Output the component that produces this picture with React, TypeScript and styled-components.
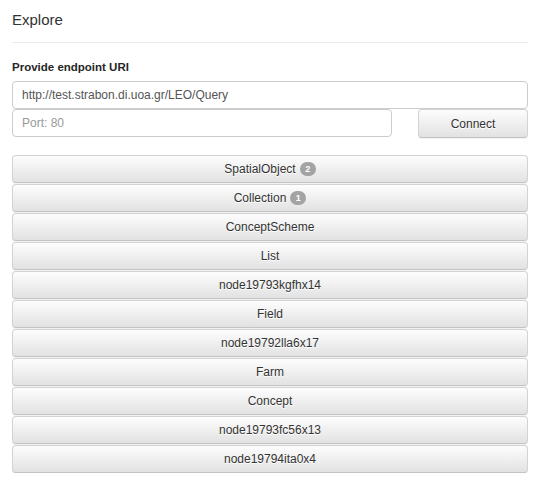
import React from "react";
import styled, { createGlobalStyle } from "styled-components";

const Global = createGlobalStyle`
  html, body { margin: 0; padding: 0; background: #fff; }
  body { font-family: "Liberation Sans", Arial, Helvetica, sans-serif; color: #333; }
  * { box-sizing: border-box; }
`;

const Page = styled.div`
  padding: 11px 11px 0 12px;
  width: 539px;
`;

const Title = styled.h3`
  margin: 0;
  font-size: 15px;
  font-weight: normal;
  line-height: 18px;
  color: #333;
`;

const Rule = styled.hr`
  border: 0;
  border-top: 1px solid #e9e9e9;
  margin: 13px 0 17px 0;
`;

const Label = styled.label`
  display: block;
  font-size: 11.5px;
  font-weight: bold;
  line-height: 14px;
  margin-bottom: 7px;
  color: #262626;
`;

const Input = styled.input`
  display: block;
  height: 28px;
  width: 100%;
  padding: 0 9px;
  font-family: inherit;
  font-size: 12px;
  color: #555;
  background: #fff;
  border: 1px solid #ccc;
  border-radius: 4px;
  outline: none;
  &::placeholder { color: #999; }
`;

const PortRow = styled.div`
  display: flex;
  align-items: flex-start;
  gap: 26px;
`;

const PortInput = styled(Input)`
  width: 380px;
  flex: none;
`;

const Btn = styled.button`
  display: flex;
  align-items: center;
  justify-content: center;
  gap: 4px;
  height: 28px;
  padding: 0 10px;
  font-family: inherit;
  font-size: 12px;
  color: #333;
  text-shadow: 0 1px 0 #fff;
  background-image: linear-gradient(to bottom, #fdfdfd 0, #e2e2e2 100%);
  border: 1px solid #d3d3d3;
  border-bottom-color: #c4c4c4;
  border-radius: 4px;
  box-shadow: inset 0 1px 0 rgba(255, 255, 255, 0.15), 0 1px 1px rgba(0, 0, 0, 0.06);
  cursor: pointer;
`;

const ConnectBtn = styled(Btn)`
  flex: 1;
  height: 29px;
`;

const List = styled.div`
  display: flex;
  flex-direction: column;
  gap: 1px;
  margin-top: 17px;
`;

const BlockBtn = styled(Btn)`
  width: 100%;
`;

const Badge = styled.span`
  display: inline-flex;
  align-items: center;
  justify-content: center;
  min-width: 16px;
  height: 14px;
  padding: 0 4px;
  border-radius: 7px;
  background: #a3a3a3;
  color: #fff;
  font-size: 9px;
  font-weight: bold;
  text-shadow: none;
  line-height: 1;
`;

const items: { name: string; count?: number }[] = [
  { name: "SpatialObject", count: 2 },
  { name: "Collection", count: 1 },
  { name: "ConceptScheme" },
  { name: "List" },
  { name: "node19793kgfhx14" },
  { name: "Field" },
  { name: "node19792lla6x17" },
  { name: "Farm" },
  { name: "Concept" },
  { name: "node19793fc56x13" },
  { name: "node19794ita0x4" },
];

export default function App() {
  return (
    <>
      <Global />
      <Page>
        <Title>Explore</Title>
        <Rule />
        <Label>Provide endpoint URI</Label>
        <Input defaultValue="http://test.strabon.di.uoa.gr/LEO/Query" />
        <PortRow>
          <PortInput placeholder="Port: 80" />
          <ConnectBtn>Connect</ConnectBtn>
        </PortRow>
        <List>
          {items.map((it) => (
            <BlockBtn key={it.name}>
              {it.name}
              {it.count !== undefined && <Badge>{it.count}</Badge>}
            </BlockBtn>
          ))}
        </List>
      </Page>
    </>
  );
}
